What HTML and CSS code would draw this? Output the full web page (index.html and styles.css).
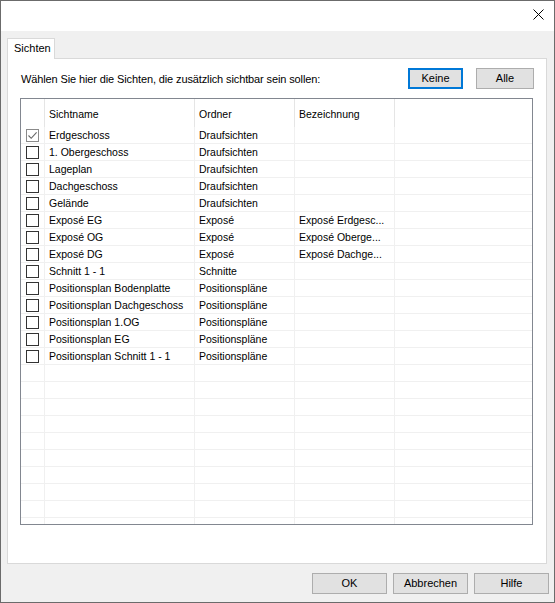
FILE: index.html
```html
<!DOCTYPE html>
<html>
<head>
<meta charset="utf-8">
<link rel="stylesheet" href="styles.css">
</head>
<body>
<div class="window">
  <div class="titlebar">
    <svg class="close" width="11" height="11" viewBox="0 0 11 11"><path d="M0.5 0.5 L10.5 10.5 M10.5 0.5 L0.5 10.5" stroke="#000" stroke-width="1" fill="none"/></svg>
  </div>
  <div class="content">
    <div class="tabs">
      <div class="tab">Sichten</div>
      <div class="tabfill"></div>
    </div>
    <div class="panel">
      <div class="toprow">
        <span class="label">Wählen Sie hier die Sichten, die zusätzlich sichtbar sein sollen:</span>
        <div class="topbtns">
          <button class="btn default keine">Keine</button>
          <button class="btn alle">Alle</button>
        </div>
      </div>
      <div class="list">
        <div class="hdr">
          <div class="c"></div>
          <div class="c t">Sichtname</div>
          <div class="c t">Ordner</div>
          <div class="c t">Bezeichnung</div>
          <div class="c last"></div>
        </div>
        <div class="row"><div class="c"><span class="cb checked"><svg width="11" height="11" viewBox="0 0 11 11"><path d="M1.5 5.5 L4.2 8.3 L9.6 2.4" stroke="#666" stroke-width="1.1" fill="none"/></svg></span></div><div class="c t">Erdgeschoss</div><div class="c t">Draufsichten</div><div class="c t"></div><div class="c last"></div></div>
        <div class="row"><div class="c"><span class="cb"></span></div><div class="c t">1. Obergeschoss</div><div class="c t">Draufsichten</div><div class="c t"></div><div class="c last"></div></div>
        <div class="row"><div class="c"><span class="cb"></span></div><div class="c t">Lageplan</div><div class="c t">Draufsichten</div><div class="c t"></div><div class="c last"></div></div>
        <div class="row"><div class="c"><span class="cb"></span></div><div class="c t">Dachgeschoss</div><div class="c t">Draufsichten</div><div class="c t"></div><div class="c last"></div></div>
        <div class="row"><div class="c"><span class="cb"></span></div><div class="c t">Gelände</div><div class="c t">Draufsichten</div><div class="c t"></div><div class="c last"></div></div>
        <div class="row"><div class="c"><span class="cb"></span></div><div class="c t">Exposé EG</div><div class="c t">Exposé</div><div class="c t">Exposé Erdgesc...</div><div class="c last"></div></div>
        <div class="row"><div class="c"><span class="cb"></span></div><div class="c t">Exposé OG</div><div class="c t">Exposé</div><div class="c t">Exposé Oberge...</div><div class="c last"></div></div>
        <div class="row"><div class="c"><span class="cb"></span></div><div class="c t">Exposé DG</div><div class="c t">Exposé</div><div class="c t">Exposé Dachge...</div><div class="c last"></div></div>
        <div class="row"><div class="c"><span class="cb"></span></div><div class="c t">Schnitt 1 - 1</div><div class="c t">Schnitte</div><div class="c t"></div><div class="c last"></div></div>
        <div class="row"><div class="c"><span class="cb"></span></div><div class="c t">Positionsplan Bodenplatte</div><div class="c t">Positionspläne</div><div class="c t"></div><div class="c last"></div></div>
        <div class="row"><div class="c"><span class="cb"></span></div><div class="c t">Positionsplan Dachgeschoss</div><div class="c t">Positionspläne</div><div class="c t"></div><div class="c last"></div></div>
        <div class="row"><div class="c"><span class="cb"></span></div><div class="c t">Positionsplan 1.OG</div><div class="c t">Positionspläne</div><div class="c t"></div><div class="c last"></div></div>
        <div class="row"><div class="c"><span class="cb"></span></div><div class="c t">Positionsplan EG</div><div class="c t">Positionspläne</div><div class="c t"></div><div class="c last"></div></div>
        <div class="row"><div class="c"><span class="cb"></span></div><div class="c t">Positionsplan Schnitt 1 - 1</div><div class="c t">Positionspläne</div><div class="c t"></div><div class="c last"></div></div>
        <div class="row"><div class="c"></div><div class="c"></div><div class="c"></div><div class="c"></div><div class="c last"></div></div>
        <div class="row"><div class="c"></div><div class="c"></div><div class="c"></div><div class="c"></div><div class="c last"></div></div>
        <div class="row"><div class="c"></div><div class="c"></div><div class="c"></div><div class="c"></div><div class="c last"></div></div>
        <div class="row"><div class="c"></div><div class="c"></div><div class="c"></div><div class="c"></div><div class="c last"></div></div>
        <div class="row"><div class="c"></div><div class="c"></div><div class="c"></div><div class="c"></div><div class="c last"></div></div>
        <div class="row"><div class="c"></div><div class="c"></div><div class="c"></div><div class="c"></div><div class="c last"></div></div>
        <div class="row"><div class="c"></div><div class="c"></div><div class="c"></div><div class="c"></div><div class="c last"></div></div>
        <div class="row"><div class="c"></div><div class="c"></div><div class="c"></div><div class="c"></div><div class="c last"></div></div>
        <div class="row"><div class="c"></div><div class="c"></div><div class="c"></div><div class="c"></div><div class="c last"></div></div>
        <div class="filler"><div class="c"></div><div class="c"></div><div class="c"></div><div class="c"></div><div class="c last"></div></div>
      </div>
    </div>
  </div>
  <div class="footer">
    <button class="btn fbtn">OK</button>
    <button class="btn fbtn">Abbrechen</button>
    <button class="btn fbtn">Hilfe</button>
  </div>
</div>
</body>
</html>
```
FILE: styles.css
```css
html, body {
  margin: 0;
  padding: 0;
  background: #f0f0f0;
}
body {
  font-family: "Liberation Sans", Arial, sans-serif;
  font-size: 11px;
  color: #000;
}
.window {
  width: 555px;
  height: 603px;
  box-sizing: border-box;
  border: 1px solid #6b6b6b;
  background: #f0f0f0;
  display: flex;
  flex-direction: column;
}
.titlebar {
  height: 30px;
  flex: none;
  box-sizing: border-box;
  background: #fff;
  display: flex;
  justify-content: flex-end;
  align-items: flex-start;
  padding: 8px 10px 0 0;
}
.close {
  display: block;
}
.content {
  flex: 1;
  display: flex;
  flex-direction: column;
  padding: 7px 7px 0 6px;
  min-height: 0;
}
.tabs {
  display: flex;
  height: 21px;
  flex: none;
}
.tab {
  width: 48px;
  box-sizing: border-box;
  height: 21px;
  border: 1px solid #d9d9d9;
  border-bottom: none;
  background: #fff;
  padding-left: 6px;
  line-height: 19px;
  font-size: 11px;
}
.tabfill {
  flex: 1;
  border-bottom: 1px solid #d9d9d9;
}
.panel {
  flex: 1;
  background: #fff;
  border: 1px solid #d9d9d9;
  border-top: none;
  padding: 9px 13px 0 12px;
  display: flex;
  flex-direction: column;
  min-height: 0;
}
.toprow {
  display: flex;
  align-items: center;
  height: 21px;
  flex: none;
}
.label {
  flex: 1;
  padding-left: 1px;
  font-size: 11px;
  letter-spacing: -0.12px;
}
.topbtns {
  display: flex;
  gap: 13px;
  margin-right: -1px;
}
.btn {
  font-family: "Liberation Sans", Arial, sans-serif;
  font-size: 11px;
  color: #000;
  background: #e1e1e1;
  border: 1px solid #adadad;
  height: 21px;
  box-sizing: border-box;
  padding: 0;
  margin: 0;
  line-height: 19px;
}
.btn.default {
  border: 2px solid #0078d7;
  line-height: 17px;
}
.keine {
  width: 55px;
}
.alle {
  width: 58px;
}
.list {
  margin-top: 9px;
  height: 427px;
  flex: none;
  box-sizing: border-box;
  border: 1px solid #828790;
  background: #fff;
  display: flex;
  flex-direction: column;
  overflow: hidden;
  font-size: 10.5px;
}
.hdr, .row, .filler {
  display: grid;
  grid-template-columns: 24px 150px 100px 100px 1fr;
}
.hdr {
  height: 28px;
  flex: none;
}
.hdr .c {
  border-right: 1px solid #e5e5e5;
  padding-top: 7px;
  line-height: 17px;
}
.row {
  height: 17px;
  flex: none;
  box-sizing: border-box;
  border-bottom: 1px solid #f0f0f0;
}
.row .c, .filler .c {
  border-right: 1px solid #f0f0f0;
  line-height: 16px;
  display: flex;
  align-items: center;
}
.c {
  box-sizing: border-box;
  white-space: nowrap;
  overflow: hidden;
}
.c.last {
  border-right: none !important;
}
.t {
  padding-left: 4px;
}
.filler {
  flex: 1;
}
.cb {
  width: 13px;
  height: 13px;
  box-sizing: border-box;
  border: 1px solid #333;
  margin-left: 5px;
  display: flex;
  background: #fff;
}
.cb.checked {
  border-color: #8a8a8a;
}
.cb svg {
  display: block;
}
.footer {
  height: 38px;
  flex: none;
  box-sizing: border-box;
  display: flex;
  justify-content: flex-end;
  align-items: flex-start;
  gap: 6px;
  padding: 9px 5px 0 0;
}
.fbtn {
  width: 75px;
}
```
